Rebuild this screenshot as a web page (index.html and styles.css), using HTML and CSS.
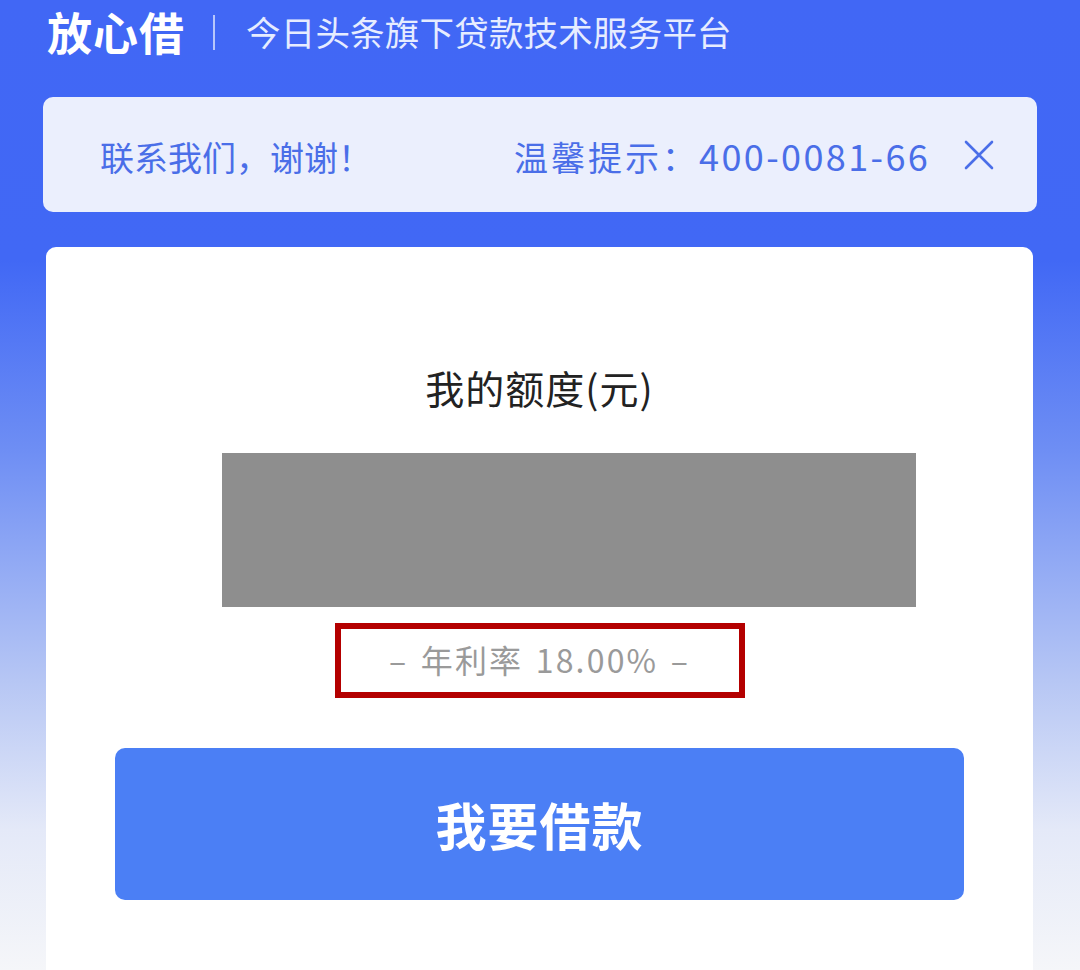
FILE: index.html
```html
<!DOCTYPE html>
<html lang="zh-CN">
<head>
<meta charset="utf-8">
<link rel="stylesheet" href="styles.css">
</head>
<body>
<div class="page">
  <header class="top">
    <span class="brand">放心借</span>
    <span class="divider"></span>
    <span class="slogan">今日头条旗下贷款技术服务平台</span>
  </header>
  <div class="notice">
    <div class="notice-track">
      <span class="notice-text">联系我们，谢谢！</span><span class="notice-text second"><span class="hint">温馨提示：</span><span class="digits">400-0081-6699</span></span>
    </div>
    <svg class="close" viewBox="0 0 32 32" width="32" height="32"><path d="M3 3 L29 29 M29 3 L3 29" stroke="#4a6ee8" stroke-width="2.6" fill="none" stroke-linecap="round"/></svg>
  </div>
  <main class="card">
    <div class="label">我的额度(元)</div>
    <div class="amount-mask"></div>
    <div class="rate-box"><span class="rate">– 年利率 18.00% –</span></div>
    <button class="borrow">我要借款</button>
  </main>
</div>
</body>
</html>
```
FILE: styles.css
```css
html, body {
  margin: 0;
  padding: 0;
}
body {
  width: 1080px;
  height: 970px;
  overflow: hidden;
  font-family: "Noto Sans CJK SC", "Noto Sans", sans-serif;
  background: linear-gradient(to bottom, #4167f5 0px, #4168f5 260px, #6e8ef4 450px, #b6c6f4 680px, #e4e9f8 830px, #f5f6f9 970px);
}
.page {
  display: flex;
  flex-direction: column;
  height: 970px;
}
.top {
  display: flex;
  align-items: center;
  height: 62px;
  padding-left: 47px;
}
.brand {
  font-size: 45px;
  font-weight: 700;
  color: #ffffff;
  letter-spacing: 1px;
}
.divider {
  width: 2px;
  height: 35px;
  background: #b7c6fb;
  margin: 2px 31px 0 28px;
}
.slogan {
  font-size: 34.5px;
  color: #e6ecff;
  letter-spacing: 0.2px;
}
.notice {
  margin: 35px 43px 0 43px;
  height: 115px;
  background: #ebeffd;
  border-radius: 10px;
  display: flex;
  align-items: center;
  padding-right: 42px;
}
.notice-track {
  flex: 1;
  overflow: hidden;
  white-space: nowrap;
  margin-left: 57px;
  margin-right: 34px;
}
.notice-text {
  font-size: 34px;
  color: #4a6ee8;
  display: inline-block;
}
.notice-text.second {
  margin-left: 142px;
}
.hint {
  letter-spacing: 3px;
}
.digits {
  font-size: 36px;
  letter-spacing: 2.4px;
}
.close {
  flex: none;
}
.card {
  margin: 35px 47px 0 46px;
  flex: 1;
  background: #ffffff;
  border-radius: 10px 10px 0 0;
  display: flex;
  flex-direction: column;
  align-items: center;
}
.label {
  margin-top: 112px;
  font-size: 39px;
  color: #222222;
  line-height: 56px;
  letter-spacing: 1px;
}
.amount-mask {
  margin-top: 38px;
  margin-left: 58px;
  width: 694px;
  height: 154px;
  background: #8e8e8e;
}
.rate-box {
  margin-top: 16px;
  width: 398px;
  height: 63px;
  border: 6px solid #b40000;
  display: flex;
  align-items: center;
  justify-content: center;
}
.rate {
  font-size: 32px;
  color: #9a9a9a;
  letter-spacing: 2.2px;
  word-spacing: 3px;
  margin-top: -4px;
}
.borrow {
  margin-top: 50px;
  width: 849px;
  height: 152px;
  border: none;
  border-radius: 10px;
  background: #4b7ff5;
  color: #ffffff;
  font-family: "Noto Sans CJK SC", "Noto Sans", sans-serif;
  font-size: 51px;
  font-weight: 700;
  letter-spacing: 1px;
}
```
